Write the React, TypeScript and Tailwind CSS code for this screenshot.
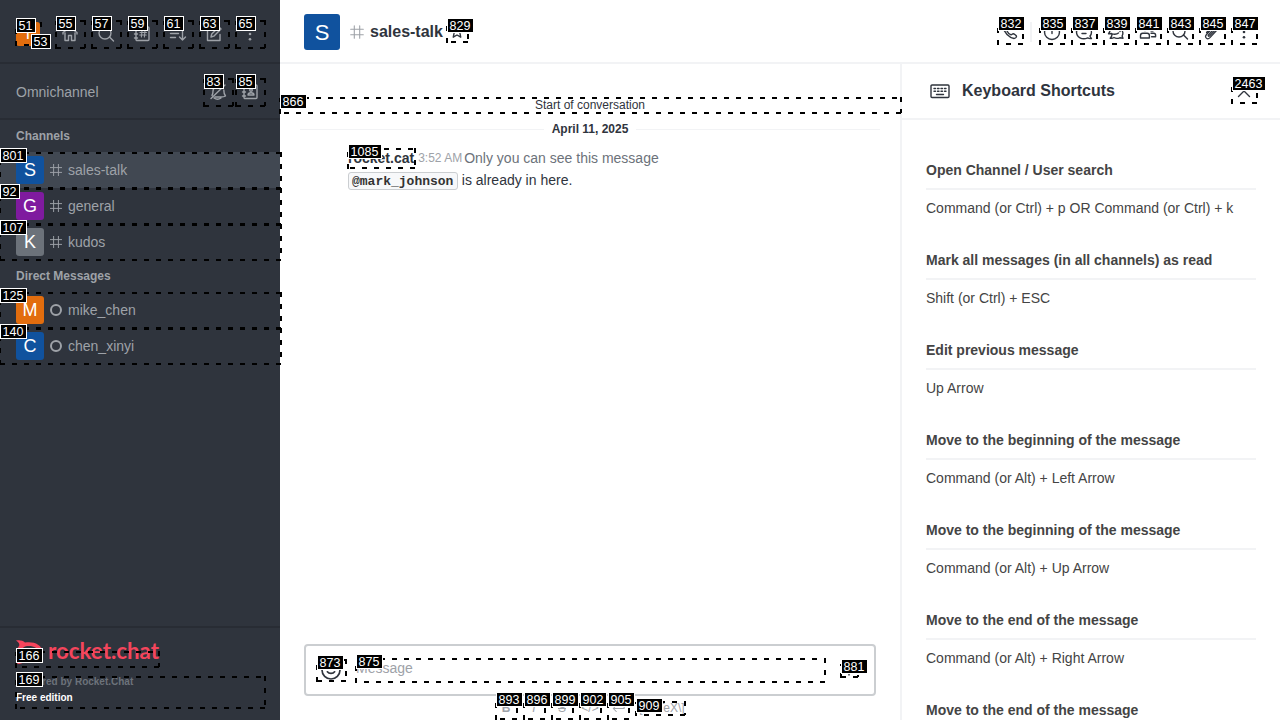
import React from "react";

const stroke = { fill: "none", stroke: "currentColor", strokeWidth: 1.4, strokeLinecap: "round", strokeLinejoin: "round" } as const;

function Icon({ children, size = 20, className = "" }: { children: React.ReactNode; size?: number; className?: string }) {
  return (
    <svg viewBox="0 0 20 20" width={size} height={size} className={"shrink-0 " + className} {...stroke}>
      {children}
    </svg>
  );
}

const icons: Record<string, React.ReactNode> = {
  home: <path d="M3 10V8.500L10 3.500l7 5V10M5 9v7.500h3.500v-5h3v5H15V9" />,
  search: <><circle cx="9" cy="9" r="6" /><path d="m13.500 13 4 4" /></>,
  directory: <><rect x="4" y="3" width="13" height="13.500" rx="1" /><path d="M2.500 6h3M2.500 10h3M2.500 14h3" /><path strokeWidth="1.100" d="M10 6.500l-.6 6.500M13 6.500l-.6 6.500M8 8.500h6.500M7.700 11h6.500" /></>,
  sort: <path d="M2.500 5.500h8M2.500 9.500h8M2.500 13.500h5M14.500 4v12M11.500 13l3 3 3-3" />,
  edit: <><path d="M10 4H3.500v12.500H16v-6" /><path d="m7 13 .7-3 7.300-7 2 2-7.200 7.200Z" /></>,
  kebab: <g fill="currentColor" stroke="none"><circle cx="10" cy="4.700" r="1.300" /><circle cx="10" cy="10" r="1.300" /><circle cx="10" cy="15.200" r="1.300" /></g>,
  bellOff: <path d="M4 13.500c1-1.500 1-3 1-4.500a5.500 5.500 0 0 1 9-4M15.800 8c0 3 .4 4.500 1.700 6-1 .8-3 1-5 1H7M3 16.500 17 3M6 16c2 1.500 5 1.500 7 0" />,
  contacts: <><rect x="4" y="3" width="13" height="13.500" rx="1" /><path d="M2.500 6h3M2.500 10h3M2.500 14h3M8 13h6c0-3-6-3-6 0Z" /><circle cx="11" cy="8" r="1.300" /></>,
  hash: <path strokeWidth="1.200" d="M7 3v14M13 3v14M3 7h14M3 13h14" />,
  phone: <path d="M3 5C4 10.500 9 15.500 14 16.500c1.500 0 2.500-1.500 2.500-2.300 0-.7-2.500-2.500-3.300-2.500s-1.400 1.200-2.100 1.100C9 12 7.500 10.500 6.500 8.300 6.300 7.600 8 6.800 8 6S6.300 2.800 5.500 2.800 3 4 3 5Z" />,
  info: <><circle cx="10" cy="10" r="7.500" /><path d="M10 6v5.500" /></>,
  thread: <path d="M16 14c.3 1 .8 1.800 1.500 2.500-1.500.2-2.800 0-3.800-.6C8 18.500 2.500 15 2.500 10S6.500 3 10 3s7.500 3 7.500 7c0 1.500-.5 3-1.500 4ZM7 8h6M8 11.500h4" />,
  discussion: <path d="M12.500 11c-2 1.500-5.500 1.500-7 .5l-3 .3L4 9C2.500 5 6 3 9 3s6.500 3 5 6.500M6 12.500c0 1.500-.8 2.700-1.800 3.700 1.500.3 2.800 0 3.800-.7 1.500 1 4 1 5.800.3l3.200.4-.9-2.200c1.400-2.500.9-5-.9-6" />,
  team: <><circle cx="7" cy="6" r="2.500" /><circle cx="14" cy="7" r="2" /><path d="M2.500 16v-2.500c0-1.400.8-2.200 2.200-2.200h4.500c1.400 0 2.200.8 2.200 2.200V16ZM13 11.300h2.700c1.200 0 1.900.7 1.900 1.900v1.600h-4" /></>,
  clip: <path strokeWidth="1.200" d="m4.500 10.500 6-6.500c3.500-3 7.500.8 4.500 4l-7 7.700c-2.700 2.700-6-.4-3.500-3.200L11 5.500c2-1.700 4.200.2 2.500 2.200l-6 6.300c-1 .8-1.800-.2-1.100-1L12 7" />,
  star: <path strokeWidth="1.700" d="m10 1.500 2.300 5.200 5.200.6-3.900 3.700 1.100 5.500L10 13.700 5.300 16.500l1.100-5.500-3.900-3.700 5.200-.6Z" />,
  keyboard: <><rect x="1" y="4" width="18" height="12.500" rx="1" /><path d="M4 7.500h1.500M7.500 7.500H9M11 7.500h1.500M14.500 7.500H16M4 10.300h1.500M7.500 10.300H9M11 10.300h1.500M14.500 10.300H16M6.500 13.500h7" /></>,
  close: <path d="m4.500 4.500 11 11M15.500 4.500l-11 11" />,
  smile: <><circle cx="10" cy="10" r="7.500" /><path d="M7 11.500c1.200 1.700 4.800 1.700 6 0M7.500 7.500v.2M12.500 7.500v.2" /></>,
  plus: <path d="M10 3v14M3 10h14" />,
  enter: <path d="M17.500 5v5H3M7 6l-4 4 4 4" />,
};

type Box = [label: string, lx: number, ly: number, x?: number, y?: number, w?: number, h?: number];

const boxes: Box[] = [
  ["51", 16, 18, 16, 23, 25, 22],
  ["53", 31, 34],
  ["55", 56, 16, 56, 21, 29, 27],
  ["57", 92, 16, 92, 21, 29, 27],
  ["59", 128, 16, 128, 21, 29, 27],
  ["61", 164, 16, 164, 21, 29, 27],
  ["63", 200, 16, 200, 21, 29, 27],
  ["65", 236, 16, 236, 21, 29, 27],
  ["83", 204, 74, 204, 79, 29, 27],
  ["85", 236, 74, 236, 79, 29, 27],
  ["801", 0, 148, 0, 153, 281, 35],
  ["92", 0, 184, 0, 189, 281, 35],
  ["107", 0, 220, 0, 225, 281, 35],
  ["125", 0, 288, 0, 293, 281, 35],
  ["140", 0, 324, 0, 329, 281, 35],
  ["166", 16, 648, 16, 652, 143, 15],
  ["169", 16, 672, 16, 677, 249, 31],
  ["829", 447, 18, 447, 23, 21, 19],
  ["832", 998, 16, 998, 23, 25, 21],
  ["835", 1040, 16, 1040, 23, 25, 21],
  ["837", 1072, 16, 1072, 23, 25, 21],
  ["839", 1104, 16, 1104, 23, 25, 21],
  ["841", 1136, 16, 1136, 23, 25, 21],
  ["843", 1168, 16, 1168, 23, 25, 21],
  ["845", 1200, 16, 1200, 23, 25, 21],
  ["847", 1232, 16, 1232, 23, 25, 21],
  ["2463", 1232, 76, 1232, 82, 25, 21],
  ["866", 280, 94, 280, 98, 621, 15],
  ["1085", 348, 144, 348, 149, 67, 19],
  ["873", 317, 655, 317, 660, 29, 21],
  ["875", 356, 654, 356, 659, 469, 23],
  ["881", 841, 659, 841, 664, 17, 13],
  ["893", 496, 692, 496, 697, 21, 22],
  ["896", 524, 692, 524, 697, 21, 22],
  ["899", 552, 692, 552, 697, 21, 22],
  ["902", 580, 692, 580, 697, 21, 22],
  ["905", 608, 692, 608, 697, 21, 22],
  ["909", 636, 698, 636, 702, 49, 13],
];

function Annotations() {
  return (
    <svg className="pointer-events-none absolute inset-0 z-10" width={1280} height={720} viewBox="0 0 1280 720">
      {boxes.map(([label, , , x, y, w, h]) =>
        x !== undefined && y !== undefined && w !== undefined && h !== undefined ? (
          <path
            key={label}
            d={`M${x} ${y}h${w}M${x + w} ${y - 1}v${h + 1}M${x + w} ${y + h}h${-w}M${x} ${y + h + 1}v${-h - 1}`}
            fill="none"
            stroke="#000"
            strokeWidth={2}
            strokeDasharray="5 7"
            shapeRendering="crispEdges"
          />
        ) : null,
      )}
      {boxes.map(([label, lx, ly]) => {
        const w = label.length === 2 ? 20 : label.length === 3 ? 27 : 34;
        return (
          <g key={label}>
            <rect x={lx + 0.5} y={ly + 0.5} width={w - 1} height={14} fill="#000" stroke="#fff" />
            <text x={lx + w / 2 - 0.5} y={ly + 12} textAnchor="middle" fill="#fff" className="font-['Liberation_Sans',sans-serif] text-[12.5px]">
              {label}
            </text>
          </g>
        );
      })}
    </svg>
  );
}

function SideItem({ letter, color, name, direct, active }: { letter: string; color: string; name: string; direct?: boolean; active?: boolean }) {
  return (
    <div className={"flex h-9 items-center px-4 " + (active ? "bg-[#414852]" : "")}>
      <div className={"flex size-7 items-center justify-center rounded-[3px] text-[18px] text-white " + color}>{letter}</div>
      <div className="ml-1 flex w-4 justify-center">
        {direct ? <div className="size-3 rounded-full border-2 border-[#9ea2a8]" /> : <Icon size={16}>{icons.hash}</Icon>}
      </div>
      <span className="ml-1 text-sm">{name}</span>
    </div>
  );
}

const shortcuts = [
  ["Open Channel / User search", "Command (or Ctrl) + p OR Command (or Ctrl) + k"],
  ["Mark all messages (in all channels) as read", "Shift (or Ctrl) + ESC"],
  ["Edit previous message", "Up Arrow"],
  ["Move to the beginning of the message", "Command (or Alt) + Left Arrow"],
  ["Move to the beginning of the message", "Command (or Alt) + Up Arrow"],
  ["Move to the end of the message", "Command (or Alt) + Right Arrow"],
  ["Move to the end of the message", ""],
];

function Sidebar() {
  return (
    <aside className="flex w-[280px] shrink-0 flex-col bg-[#2f343d] text-[#9ea2a8]">
      <div className="flex h-16 shrink-0 items-center border-b-2 border-[#282c34] px-4 pt-1.5">
        <div className="flex size-6 items-center justify-center rounded-[3px] bg-[#e26d0e] text-base text-white">T</div>
        <div className="ml-4 flex gap-2">
          {["home", "search", "directory", "sort", "edit", "kebab"].map((n) => (
            <div key={n} className="flex size-7 items-center justify-center"><Icon>{icons[n]}</Icon></div>
          ))}
        </div>
      </div>
      <div className="flex h-14 shrink-0 items-center border-b-2 border-[#282c34] px-4 pt-0.5">
        <span className="flex-1 text-sm">Omnichannel</span>
        <div className="flex gap-1">
          <div className="flex size-7 items-center justify-center"><Icon>{icons.bellOff}</Icon></div>
          <div className="flex size-7 items-center justify-center"><Icon>{icons.contacts}</Icon></div>
        </div>
      </div>
      <div className="flex-1">
        <div className="flex h-8 items-center px-4 text-xs font-bold">Channels</div>
        <SideItem letter="S" color="bg-[#10529e]" name="sales-talk" active />
        <SideItem letter="G" color="bg-[#7f1b9f]" name="general" />
        <SideItem letter="K" color="bg-[#6c727a]" name="kudos" />
        <div className="flex h-8 items-center px-4 text-xs font-bold">Direct Messages</div>
        <SideItem letter="M" color="bg-[#e26d0e]" name="mike_chen" direct />
        <SideItem letter="C" color="bg-[#10529e]" name="chen_xinyi" direct />
      </div>
      <div className="h-[94px] border-t-2 border-[#282c34] px-4 pt-3">
        <svg width="144" height="24" viewBox="0 0 144 24" fill="#f5455c" className="block">
          <path d="M0 .5C3-.2 7 .3 9 2.500c8-1.500 16.500 1.500 18 9.500-2 8-10 10-18 9-2 2-5 3.500-8 3 2-2 3-4 2-6-3-4-3-8 0-12C4 4 2.500 2 0 .5ZM9 6.500c-6 3-6 8 0 11 7 1 13-1 13-5.500s-6-7-13-5.500Z" fillRule="evenodd" />
          <text x="32" y="18.500" textLength="111" lengthAdjust="spacingAndGlyphs" className="font-['Lato',sans-serif] text-[22px] font-bold">rocket.chat</text>
        </svg>
        <div className="mt-2.5 text-[10px] leading-4 font-bold">
          <div className="text-[#6c727a]">Powered by Rocket.Chat</div>
          <div className="text-white">Free edition</div>
        </div>
      </div>
    </aside>
  );
}

export default function App() {
  return (
    <div className="relative flex h-[720px] w-[1280px] overflow-hidden bg-white font-['Liberation_Sans',sans-serif] text-[#2f343d]">
      <Sidebar />
      <div className="flex min-w-0 flex-1 flex-col">
        <header className="flex h-16 shrink-0 items-center border-b-2 border-[#f2f3f5] px-6 pt-0.5">
          <div className="flex size-9 items-center justify-center rounded-[3px] bg-[#10529e] text-[22px] text-white">S</div>
          <Icon size={18} className="ml-2 text-[#9ea2a8]">{icons.hash}</Icon>
          <h1 className="ml-1 text-base font-bold">sales-talk</h1>
          <Icon size={16} className="ml-1.5">{icons.star}</Icon>
          <div className="ml-auto flex items-center gap-2">
            <div className="flex size-6 items-center justify-center"><Icon>{icons.phone}</Icon></div>
            <div className="h-5 w-0.5 bg-[#f2f3f5]" />
            {["info", "thread", "discussion", "team", "search", "clip", "kebab"].map((n) => (
              <div key={n} className="flex size-6 items-center justify-center"><Icon>{icons[n]}</Icon></div>
            ))}
          </div>
        </header>
        <div className="flex min-h-0 flex-1">
          <main className="flex w-[620px] shrink-0 flex-col">
            <div className="mt-8 h-[18px] text-center text-xs leading-[18px]">Start of conversation</div>
            <div className="mt-[7px] flex h-4 items-center px-5 text-xs font-bold">
              <div className="h-px flex-1 bg-[#f2f3f5]" />
              <span className="px-2">April 11, 2025</span>
              <div className="h-px flex-1 bg-[#f2f3f5]" />
            </div>
            <div className="mt-[11px] pl-[68px] text-sm">
              <div className="flex h-5 items-center">
                <b>rocket.cat</b>
                <span className="ml-1 text-xs text-[#9ea2a8]">3:52 AM</span>
                <span className="ml-0.5 text-[#6c727a]">Only you can see this message</span>
              </div>
              <div className="mt-[3px] flex h-5 items-center">
                <code className="flex h-[18px] items-center rounded-[3px] border border-[#cbced1] bg-[#f7f8fa] pr-[3.8px] pl-[3px] pt-0.5 font-['Liberation_Mono',monospace] text-[13px] font-bold text-[#333]">@mark_johnson</code>
                <span className="mb-0.5 ml-[3.6px]">is already in here.</span>
              </div>
            </div>
            <div className="mx-6 mt-auto flex h-[52px] shrink-0 items-center rounded-[4px] border-2 border-[#cbced1] px-[13px]">
              <Icon size={24}>{icons.smile}</Icon>
              <span className="mb-1 ml-[13px] flex-1 text-sm text-[#9ea2a8]">Message</span>
              <Icon className="mr-0.5 mb-1">{icons.plus}</Icon>
            </div>
            <div className="flex h-6 shrink-0 items-center gap-2 pl-[216px] text-xs text-[#9ea2a8]">
              <b className="w-5 text-center">B</b>
              <i className="w-5 text-center">I</i>
              <s className="w-5 text-center">S</s>
              <span className="w-5 text-center">&lt;/&gt;</span>
              <span className="flex w-5 justify-center"><Icon size={15}>{icons.enter}</Icon></span>
              <span>\[KaTeX\]</span>
            </div>
          </main>
          <section className="flex min-w-0 flex-1 flex-col border-l-2 border-[#f2f3f5]">
            <div className="flex h-14 shrink-0 items-center border-b-2 border-[#f2f3f5] pr-[27px] pl-7">
              <Icon size={20}>{icons.keyboard}</Icon>
              <h2 className="ml-3 flex-1 text-base font-bold">Keyboard Shortcuts</h2>
              <Icon className="mr-[-1px]">{icons.close}</Icon>
            </div>
            <div className="min-h-0 flex-1 overflow-hidden px-6 pt-10 text-sm text-[#444]">
              {shortcuts.map(([title, keys], i) => (
                <div key={i} className="h-[90px]">
                  <div className="h-[30px] border-b-2 border-[#f2f3f5] leading-5 font-bold">{title}</div>
                  <div className="mt-2 leading-5">{keys}</div>
                </div>
              ))}
            </div>
          </section>
        </div>
      </div>
      <Annotations />
    </div>
  );
}
